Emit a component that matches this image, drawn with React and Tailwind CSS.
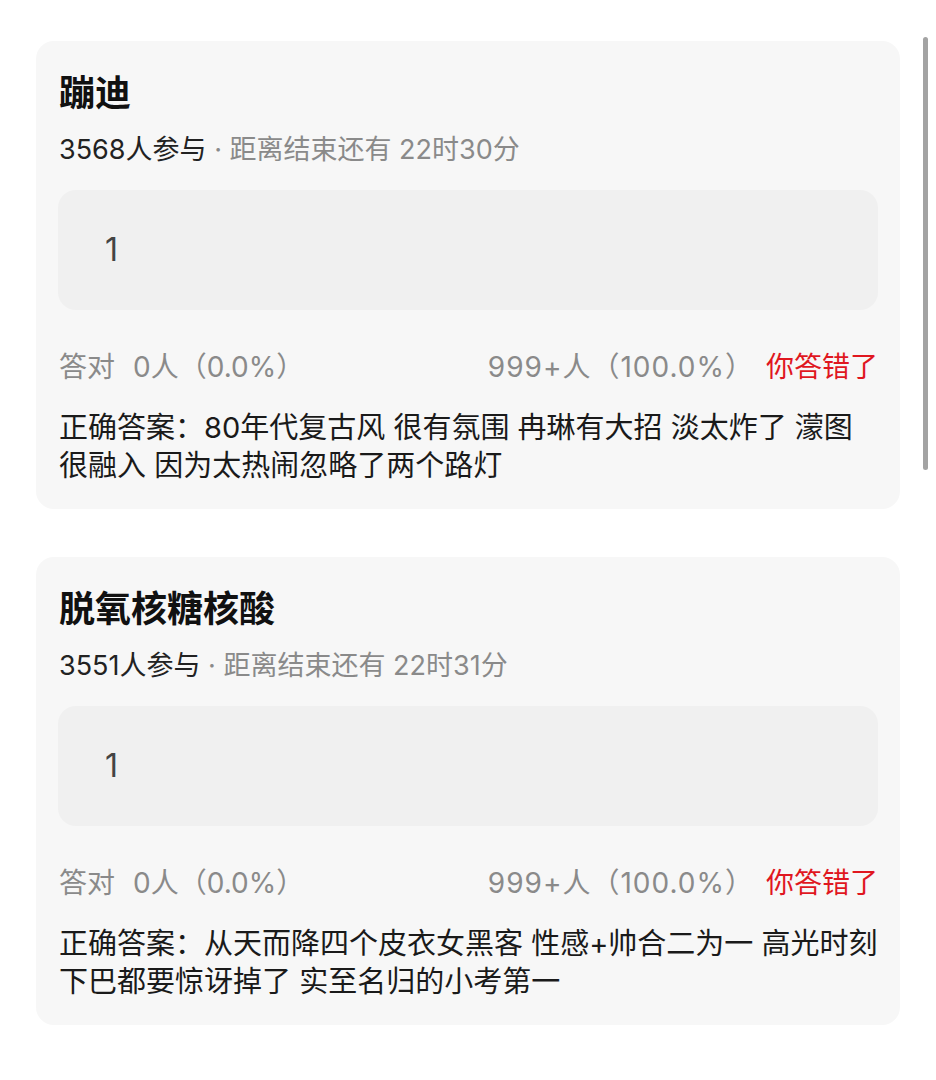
import React from 'react';

const font = { fontFamily: 'Inter, "Noto Sans CJK SC", "Noto Sans", sans-serif' };

const polls = [
  {
    title: '蹦迪',
    joined: '3568人参与',
    remain: '· 距离结束还有 22时30分',
    answer: '1',
    right: '0人（0.0%）',
    wrong: '999+人（100.0%）',
    correct: '正确答案：80年代复古风 很有氛围 冉琳有大招 淡太炸了 濛图很融入 因为太热闹忽略了两个路灯',
  },
  {
    title: '脱氧核糖核酸',
    joined: '3551人参与',
    remain: '· 距离结束还有 22时31分',
    answer: '1',
    right: '0人（0.0%）',
    wrong: '999+人（100.0%）',
    correct: '正确答案：从天而降四个皮衣女黑客 性感+帅合二为一 高光时刻下巴都要惊讶掉了 实至名归的小考第一',
  },
];

const PollCard = ({ poll }) => (
  <div className="bg-[#f7f7f7] rounded-[18px] pl-[23px] pr-[22px] pt-[30px] pb-[24px]">
    <h2 className="text-[36px] leading-[44px] font-bold text-[#111]">{poll.title}</h2>
    <p className="mt-[17px] text-[27px] leading-[36px] text-[#222]">
      {poll.joined} <span className="text-[#8a8a8a]">{poll.remain}</span>
    </p>
    <div className="mt-[22px] -ml-px h-[120px] bg-[#f0f0f0] rounded-[18px] flex items-center pl-[47px]">
      <span className="text-[32px] text-[#444]">{poll.answer}</span>
    </div>
    <div className="mt-[39px] flex items-center justify-between text-[28px] leading-[36px]">
      <div className="flex items-center gap-[18px] text-[#8a8a8a]">
        <span>答对</span>
        <span>{poll.right}</span>
      </div>
      <div className="flex items-center gap-[12px]">
        <span className="text-[#8a8a8a] tracking-[1px]">{poll.wrong}</span>
        <span className="text-[#e0171f]">你答错了</span>
      </div>
    </div>
    <p className="mt-[24px] text-[29px] leading-[38px] text-[#1a1a1a]">{poll.correct}</p>
  </div>
);

export default function App() {
  return (
    <div style={font} className="relative min-h-[1080px] bg-white pt-[41px] pl-[36px] pr-[36px]">
      <div className="flex flex-col gap-[48px]">
        {polls.map((p) => (
          <PollCard key={p.title} poll={p} />
        ))}
      </div>
      <div className="absolute right-[8px] top-[37px] w-[5px] h-[433px] rounded-full bg-[#a3a3a3]" />
    </div>
  );
}
